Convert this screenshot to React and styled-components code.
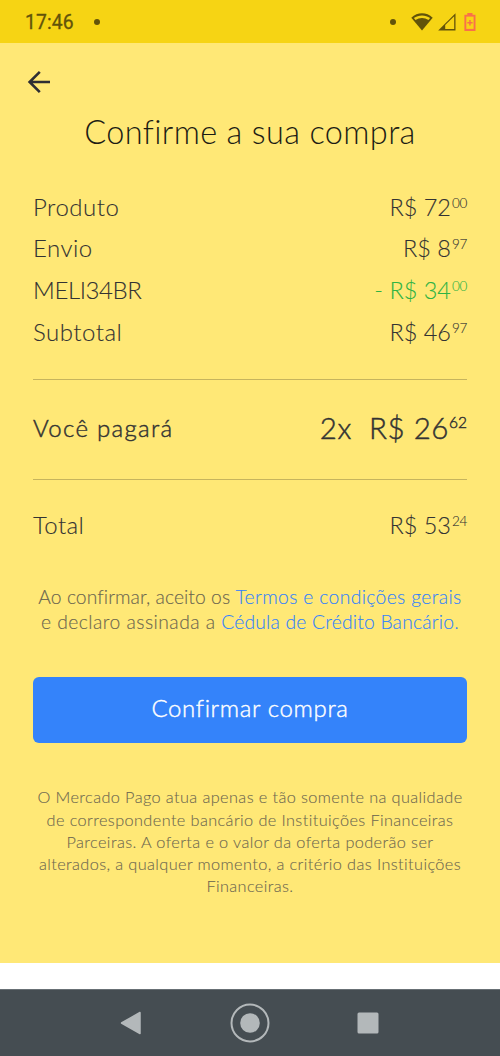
import React from 'react';
import styled, { createGlobalStyle } from 'styled-components';

const GlobalStyle = createGlobalStyle`
  * {
    box-sizing: border-box;
  }
  body {
    margin: 0;
    background: #fff;
    font-family: Lato, 'Open Sans', sans-serif;
    font-weight: 300;
  }
`;

const Screen = styled.div`
  width: 500px;
  height: 1056px;
  display: flex;
  flex-direction: column;
  overflow: hidden;
`;

const StatusBar = styled.div`
  height: 43px;
  flex: none;
  display: flex;
  align-items: center;
  padding: 0 24px 0 25px;
  background: #f6d414;
  color: #62530a;
`;

const Clock = styled.span`
  font: 400 19.3px/43px Roboto, sans-serif;
  letter-spacing: 0.15px;
  -webkit-text-stroke: 0.3px;
  padding-top: 2px;
  width: 68.5px;
`;

const Dot = styled.span`
  width: 6px;
  height: 6px;
  border-radius: 50%;
  background: currentColor;
`;

const StatusIcons = styled.div`
  display: flex;
  align-items: center;
  margin-left: auto;
  svg {
    display: block;
  }
`;

const WifiIcon = styled.svg`
  margin-left: 15px;
`;

const SignalIcon = styled.svg`
  margin-left: 5px;
`;

const BatteryIcon = styled.svg`
  margin-left: 8px;
`;

const Content = styled.main`
  height: 920px;
  flex: none;
  padding: 25px 33px 0;
  background: #ffe876;
  color: #333;
`;

const BackButton = styled.button`
  display: block;
  margin-left: -7px;
  padding: 0;
  border: 0;
  background: none;
  height: 28px;
  svg {
    display: block;
  }
`;

const Title = styled.h1`
  margin: 13px 0 0;
  font-size: 32.5px;
  line-height: 46px;
  font-weight: 300;
  letter-spacing: 0.35px;
  text-align: center;
  white-space: nowrap;
  color: #1c1c14;
`;

const Summary = styled.div`
  padding: 31.5px 0 25.7px;
`;

const Row = styled.div`
  display: flex;
  justify-content: space-between;
  height: 41.7px;
  line-height: 41.7px;
  font-size: 23.5px;
  white-space: pre;
  -webkit-text-stroke: 0.1px;
`;

const Label = styled.span`
  margin-top: -1px;
  font-size: 24px;
  letter-spacing: ${(props) => props.$spacing || 0.5}px;
`;

const Amount = styled.span`
  display: flex;
  color: ${(props) => (props.$discount ? '#2fb344' : 'inherit')};
`;

const Cents = styled.span`
  font-size: 13.5px;
  line-height: 33px;
  margin-left: 1px;
  letter-spacing: -0.3px;
`;

const Divider = styled.hr`
  margin: 0;
  border: 0;
  height: 1px;
  background: #c6b45d;
`;

const PayRow = styled(Row)`
  height: 99px;
  line-height: 96px;
  -webkit-text-stroke: 0.45px;
`;

const PayLabel = styled(Label)`
  margin-top: 0;
  letter-spacing: 1.3px;
`;

const PayAmount = styled(Amount)`
  font-size: 29.5px;
  letter-spacing: 0.55px;
`;

const PayCents = styled(Cents)`
  font-size: 15.5px;
  line-height: 84px;
  margin-left: 0;
  letter-spacing: 0;
`;

const TotalRow = styled(Row)`
  margin-top: 24.8px;
`;

const Terms = styled.p`
  margin: 38px 0 0;
  font-size: 19.3px;
  line-height: 25px;
  text-align: center;
  white-space: nowrap;
  color: #6b6650;
  -webkit-text-stroke: 0.12px;
`;

const TermsText = styled.span`
  letter-spacing: ${(props) => props.$spacing}px;
`;

const TermsLink = styled.a`
  color: #3483fa;
  letter-spacing: ${(props) => props.$spacing}px;
`;

const ConfirmButton = styled.button`
  display: block;
  width: 434px;
  height: 66.5px;
  margin-top: 42.3px;
  padding: 0 0 4px;
  border: 0;
  border-radius: 6px;
  background: #3483fa;
  color: #fff;
  font: 300 24px Lato, sans-serif;
  letter-spacing: 0.65px;
  -webkit-text-stroke: 0.4px;
`;

const Disclaimer = styled.p`
  margin: 43.2px -10px 0;
  font-size: 16.3px;
  line-height: 22.2px;
  letter-spacing: 0.4px;
  text-align: center;
  white-space: nowrap;
  color: #6b6650;
  -webkit-text-stroke: 0.1px;
`;

const NavBar = styled.nav`
  height: 67px;
  flex: none;
  margin-top: 26px;
  padding: 0 121px 0 119px;
  background: #454d52;
  border-top: 1px solid #687075;
  display: flex;
  align-items: center;
  justify-content: space-between;
  svg {
    overflow: visible;
  }
`;

const items = [
  { label: 'Produto', value: 'R$ 72', cents: '00' },
  { label: 'Envio', value: 'R$ 8', cents: '97' },
  { label: 'MELI34BR', value: '- R$ 34', cents: '00', discount: true, spacing: -0.4 },
  { label: 'Subtotal', value: 'R$ 46', cents: '97' },
];

const App = () => (
  <Screen>
    <GlobalStyle />
    <StatusBar>
      <Clock>17:46</Clock>
      <Dot />
      <StatusIcons>
        <Dot />
        <WifiIcon width="22" height="18" viewBox="0 0 22 18">
          <path d="M0.3 4.7C6.5-1.1 15.5-1.1 21.7 4.7L11 17.6z" fill="#62530a" />
          <path d="M2.9 5.1C7.5 1.6 14.5 1.6 19.1 5.1L17.5 7C13.5 4.2 8.5 4.2 4.5 7z" fill="#f6d414" />
        </WifiIcon>
        <SignalIcon width="18" height="18" viewBox="0 0 18 18">
          <path d="M0.2 17.5L17.5 0.2V17.5z" fill="#62530a" />
          <path d="M7.2 11.9L16.2 3.2V16H7.2z" fill="#f6d414" />
        </SignalIcon>
        <BatteryIcon width="12" height="18" viewBox="0 0 12 18">
          <path d="M3.3 0h5.2v1.7h3V18H0.4V1.7h2.9z" fill="#f9704a" />
          <path d="M2.3 3.6h7.3v12.3H2.3z" fill="#f6d414" />
          <path d="M5.95 7.1v5.4M3.3 9.8h5.3" stroke="#f9704a" strokeWidth="1.5" />
        </BatteryIcon>
      </StatusIcons>
    </StatusBar>

    <Content>
      <BackButton aria-label="Voltar">
        <svg width="28" height="28" viewBox="0 0 28 28" fill="none" stroke="#2e2e33" strokeWidth="2.6">
          <path d="M24 14H4M13.8 3.8L3.6 14l10.2 10.2" />
        </svg>
      </BackButton>
      <Title>Confirme a sua compra</Title>

      <Summary>
        {items.map((item) => (
          <Row key={item.label}>
            <Label $spacing={item.spacing}>{item.label}</Label>
            <Amount $discount={item.discount}>
              {item.value}
              <Cents>{item.cents}</Cents>
            </Amount>
          </Row>
        ))}
      </Summary>

      <Divider />
      <PayRow>
        <PayLabel>Você pagará</PayLabel>
        <PayAmount>
          2x  R$ 26
          <PayCents>62</PayCents>
        </PayAmount>
      </PayRow>
      <Divider />

      <TotalRow>
        <Label $spacing={0.4}>Total</Label>
        <Amount>
          R$ 53
          <Cents>24</Cents>
        </Amount>
      </TotalRow>

      <Terms>
        <TermsText $spacing={0.05}>Ao confirmar, aceito os </TermsText>
        <TermsLink $spacing={0.36}>Termos e condições gerais</TermsLink>
        <br />
        <TermsText $spacing={0.45}>e declaro assinada a </TermsText>
        <TermsLink $spacing={0.2}>Cédula de Crédito Bancário.</TermsLink>
      </Terms>

      <ConfirmButton>Confirmar compra</ConfirmButton>

      <Disclaimer>
        O Mercado Pago atua apenas e tão somente na qualidade
        <br />
        de correspondente bancário de Instituições Financeiras
        <br />
        Parceiras. A oferta e o valor da oferta poderão ser
        <br />
        alterados, a qualquer momento, a critério das Instituições
        <br />
        Financeiras.
      </Disclaimer>
    </Content>

    <NavBar>
      <svg width="22" height="24" viewBox="0 0 22 24">
        <path d="M2.5 12L21 1.5v21z" fill="#b3b8ba" stroke="#b3b8ba" strokeWidth="1.5" strokeLinejoin="round" />
      </svg>
      <svg width="40" height="40" viewBox="-1 0 40 40">
        <circle cx="20" cy="20" r="18.5" fill="none" stroke="#b3b8ba" strokeWidth="2" />
        <circle cx="20" cy="20" r="9.8" fill="#b3b8ba" />
      </svg>
      <svg width="22" height="22" viewBox="0 0 22 22">
        <rect x="0.5" y="0.5" width="21" height="21" rx="1.5" fill="#b3b8ba" />
      </svg>
    </NavBar>
  </Screen>
);

export default App;
